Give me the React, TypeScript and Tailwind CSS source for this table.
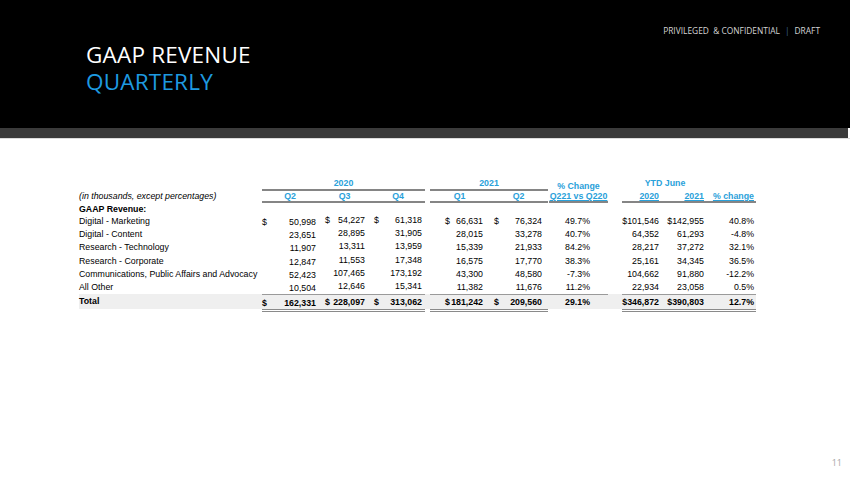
import clsx from "clsx";

const BLUE = "text-[#2aa1da]";

// column cells: widths sum to the table width (79px -> 756px)
const C = [
  "w-[56px] pr-[2px]",
  "w-[53px] pl-[7px] pr-[6px]",
  "w-[54px] pl-[3px] pr-[3px]",
  "w-[59px] pl-[15px] pr-[6px]",
  "w-[59px] pl-[5px] pr-[6px]",
  "w-[59px] pr-[18px]",
  "w-[41px] pr-[4px]",
  "w-[45px] pr-[4px]",
  "w-[48px] pr-[2px]",
];

type Row = { label: string; v: string[]; dollar?: boolean };

const ROWS: Row[] = [
  { label: "Digital - Marketing", dollar: true, v: ["50,998", "54,227", "61,318", "66,631", "76,324", "49.7%", "$101,546", "$142,955", "40.8%"] },
  { label: "Digital - Content", v: ["23,651", "28,895", "31,905", "28,015", "33,278", "40.7%", "64,352", "61,293", "-4.8%"] },
  { label: "Research - Technology", v: ["11,907", "13,311", "13,959", "15,339", "21,933", "84.2%", "28,217", "37,272", "32.1%"] },
  { label: "Research - Corporate", v: ["12,847", "11,553", "17,348", "16,575", "17,770", "38.3%", "25,161", "34,345", "36.5%"] },
  { label: "Communications, Public Affairs and Advocacy", v: ["52,423", "107,465", "173,192", "43,300", "48,580", "-7.3%", "104,662", "91,880", "-12.2%"] },
  { label: "All Other", v: ["10,504", "12,646", "15,341", "11,382", "11,676", "11.2%", "22,934", "23,058", "0.5%"] },
];

const TOTAL = ["162,331", "228,097", "313,062", "181,242", "209,560", "29.1%", "$346,872", "$390,803", "12.7%"];

function Money({ i, v, dollar }: { i: number; v: string; dollar?: boolean }) {
  return (
    <div className={clsx("flex justify-between", C[i], i === 0 && "pt-[2px]")}>
      <span>{dollar ? "$" : ""}</span>
      <span>{v}</span>
    </div>
  );
}

function Plain({ i, v }: { i: number; v: string }) {
  return <div className={clsx("text-right", C[i])}>{v}</div>;
}

function Cells({ v, dollar }: { v: string[]; dollar?: boolean }) {
  return (
    <>
      <div className="flex">
        <Money i={0} v={v[0]} dollar={dollar} />
        <Money i={1} v={v[1]} dollar={dollar} />
        <Money i={2} v={v[2]} dollar={dollar} />
      </div>
      <div className="w-[5px]" />
      <div className="flex">
        <Money i={3} v={v[3]} dollar={dollar} />
        <Money i={4} v={v[4]} dollar={dollar} />
      </div>
      <div className="w-px" />
      <Plain i={5} v={v[5]} />
      <div className="w-[14px]" />
      <div className="flex">
        <Plain i={6} v={v[6]} />
        <Plain i={7} v={v[7]} />
        <Plain i={8} v={v[8]} />
      </div>
    </>
  );
}

export default function App() {
  return (
    <div className="w-[850px] h-[478px] bg-white flex flex-col overflow-hidden font-['Liberation_Sans',Arial,sans-serif]">
      {/* header */}
      <div className="h-[128px] bg-black flex flex-col">
        <div className="flex justify-end pr-[30px] pt-[25px] font-['Open_Sans',sans-serif] text-[8.4px] leading-[12px] text-[#d4d4d4] whitespace-pre">
          <span>PRIVILEGED  &amp; CONFIDENTIAL</span>
          <span className="text-[#3b6e96] px-[5px]">|</span>
          <span>DRAFT</span>
        </div>
        <div className="pl-[86px] mt-[4px] font-['Open_Sans',sans-serif] text-[22.5px] leading-[27px] tracking-[0.2px]">
          <div className="text-white">GAAP REVENUE</div>
          <div className="text-[#1e9ae0]">QUARTERLY</div>
        </div>
      </div>
      <div className="h-[10px] w-[848px] bg-[#3b3b3b]" />
      <div className="h-px bg-[#dcdcdc]" />

      {/* table */}
      <div className="mt-[39px] pl-[79px] text-[8.8px] text-black leading-[11px]">
        <div className={clsx("flex h-[13px] font-bold", BLUE)}>
          <div className="w-[183px]" />
          <div className="w-[163px] border-b-2 border-[#858585] text-center">2020</div>
          <div className="w-[5px]" />
          <div className="w-[118px] border-b-2 border-[#858585] text-center">2021</div>
          <div className="w-px" />
          <div className="w-[59px] text-center pt-[3px]">% Change</div>
          <div className="w-[14px]" />
          <div className="w-[86px] text-center">YTD June</div>
        </div>
        <div className="flex h-[12px] items-end">
          <div className="w-[183px] italic pb-[1px] leading-[11px]">(in thousands, except percentages)</div>
          <div className={clsx("flex border-b-2 border-[#858585] font-bold h-[12px]", BLUE)}>
            <div className="w-[56px] text-center">Q2</div>
            <div className="w-[53px] text-center">Q3</div>
            <div className="w-[54px] text-center">Q4</div>
          </div>
          <div className="w-[5px]" />
          <div className={clsx("flex border-b-2 border-[#858585] font-bold h-[12px]", BLUE)}>
            <div className="w-[59px] text-center">Q1</div>
            <div className="w-[59px] text-center">Q2</div>
          </div>
          <div className="w-px" />
          <div className={clsx("w-[59px] border-b-2 border-[#858585] font-bold h-[12px] text-center whitespace-nowrap", BLUE)}>
            <span className="underline">Q221 vs Q220</span>
          </div>
          <div className="w-[14px]" />
          <div className={clsx("flex border-b-2 border-[#858585] font-bold h-[12px]", BLUE)}>
            <div className="w-[41px] text-right pr-[4px] underline">2020</div>
            <div className="w-[45px] text-right pr-[4px] underline">2021</div>
            <div className="w-[48px] text-right pr-[2px] underline">% change</div>
          </div>
        </div>
        <div className="h-[12px] flex items-center font-bold">GAAP Revenue:</div>
        {ROWS.map((r) => (
          <div key={r.label} className="flex h-[13.2px] items-center">
            <div className="w-[183px] whitespace-nowrap">{r.label}</div>
            <Cells v={r.v} dollar={r.dollar} />
          </div>
        ))}
        <div className="flex h-[15px] w-[677px] bg-[#efefef] font-bold items-stretch">
          <div className="w-[183px] flex items-center">Total</div>
          <div className="flex items-center border-t border-[#9a9a9a]">
            <Money i={0} v={TOTAL[0]} dollar />
            <Money i={1} v={TOTAL[1]} dollar />
            <Money i={2} v={TOTAL[2]} dollar />
          </div>
          <div className="w-[5px]" />
          <div className="flex items-center border-t border-[#9a9a9a]">
            <Money i={3} v={TOTAL[3]} dollar />
            <Money i={4} v={TOTAL[4]} dollar />
            <div className="w-px" />
            <Plain i={5} v={TOTAL[5]} />
          </div>
          <div className="w-[14px]" />
          <div className="flex items-center border-t border-[#9a9a9a]">
            <Plain i={6} v={TOTAL[6]} />
            <Plain i={7} v={TOTAL[7]} />
            <Plain i={8} v={TOTAL[8]} />
          </div>
        </div>
        <div className="flex h-[3px]">
          <div className="w-[183px]" />
          <div className="w-[163px] border-y border-[#8a8a8a]" />
          <div className="w-[5px]" />
          <div className="w-[118px] border-y border-[#8a8a8a]" />
          <div className="w-[74px]" />
          <div className="w-[134px] border-y border-[#8a8a8a]" />
        </div>
      </div>

      {/* footer */}
      <div className="mt-auto flex justify-end pr-[8px] pb-[9px] font-['Open_Sans',sans-serif] text-[9px] text-[#a6a6a6]">
        11
      </div>
    </div>
  );
}
